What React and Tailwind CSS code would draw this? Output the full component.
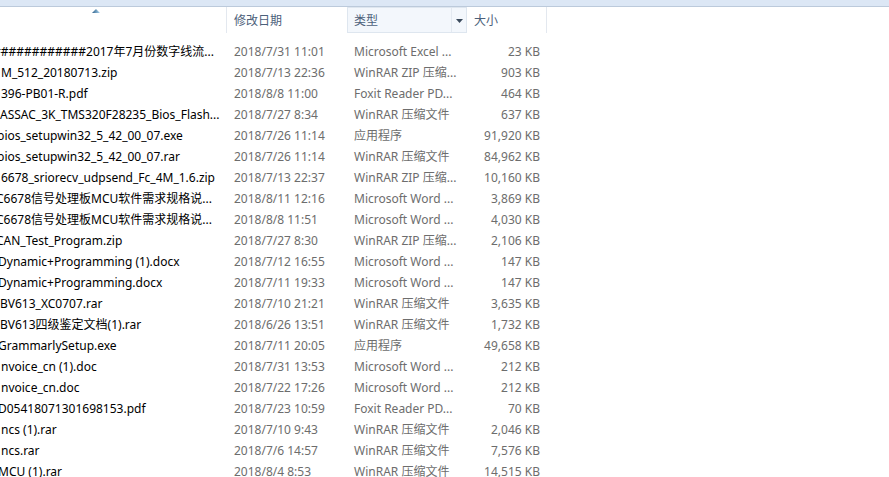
import React from "react";

const rows = [
  ["############2017年7月份数字线流...", "ml-[-7px]", "2018/7/31 11:01", "Microsoft Excel ...", "23 KB"],
  ["M_512_20180713.zip", "ml-[1px]", "2018/7/13 22:36", "WinRAR ZIP 压缩...", "903 KB"],
  ["396-PB01-R.pdf", "ml-[1px]", "2018/8/8 11:00", "Foxit Reader PD...", "464 KB"],
  ["ASSAC_3K_TMS320F28235_Bios_Flash...", "ml-[0px]", "2018/7/27 8:34", "WinRAR 压缩文件", "637 KB"],
  ["bios_setupwin32_5_42_00_07.exe", "ml-[-3px]", "2018/7/26 11:14", "应用程序", "91,920 KB"],
  ["bios_setupwin32_5_42_00_07.rar", "ml-[-3px]", "2018/7/26 11:14", "WinRAR 压缩文件", "84,962 KB"],
  ["6678_sriorecv_udpsend_Fc_4M_1.6.zip", "ml-[1px]", "2018/7/13 22:37", "WinRAR ZIP 压缩...", "10,160 KB"],
  ["C6678信号处理板MCU软件需求规格说...", "ml-[-4px]", "2018/8/11 12:16", "Microsoft Word ...", "3,869 KB"],
  ["C6678信号处理板MCU软件需求规格说...", "ml-[-4px]", "2018/8/8 11:51", "Microsoft Word ...", "4,030 KB"],
  ["CAN_Test_Program.zip", "ml-[-4px]", "2018/7/27 8:30", "WinRAR ZIP 压缩...", "2,106 KB"],
  ["Dynamic+Programming (1).docx", "ml-[-2px]", "2018/7/12 16:55", "Microsoft Word ...", "147 KB"],
  ["Dynamic+Programming.docx", "ml-[-2px]", "2018/7/11 19:33", "Microsoft Word ...", "147 KB"],
  ["BV613_XC0707.rar", "ml-[0px]", "2018/7/10 21:21", "WinRAR 压缩文件", "3,635 KB"],
  ["BV613四级鉴定文档(1).rar", "ml-[0px]", "2018/6/26 13:51", "WinRAR 压缩文件", "1,732 KB"],
  ["GrammarlySetup.exe", "ml-[-2px]", "2018/7/11 20:05", "应用程序", "49,658 KB"],
  ["nvoice_cn (1).doc", "ml-[1px]", "2018/7/31 13:53", "Microsoft Word ...", "212 KB"],
  ["nvoice_cn.doc", "ml-[1px]", "2018/7/22 17:26", "Microsoft Word ...", "212 KB"],
  ["D05418071301698153.pdf", "ml-[-2px]", "2018/7/23 10:59", "Foxit Reader PD...", "70 KB"],
  ["ncs (1).rar", "ml-[1px]", "2018/7/10 9:43", "WinRAR 压缩文件", "2,046 KB"],
  ["ncs.rar", "ml-[1px]", "2018/7/6 14:57", "WinRAR 压缩文件", "7,576 KB"],
  ["MCU (1).rar", "ml-[-2px]", "2018/8/4 8:53", "WinRAR 压缩文件", "14,515 KB"],
];

export default function App() {
  return (
    <div
      className="w-[889px] h-[477px] overflow-hidden bg-white text-[12px]"
      style={{ fontFamily: '"Noto Sans", "Noto Sans CJK SC", sans-serif' }}
    >
      <div className="h-[7px] bg-[#dce7f5] border-b border-[#bccadb]" />
      <div className="flex h-[26px] text-[#4c607a]">
        <div className="w-[227px] h-full border-r border-[#e3e8ef] pt-[2px] pl-[92px]">
          <svg width="8" height="5" viewBox="0 0 8 5">
            <defs>
              <linearGradient id="sa" x1="0" y1="0" x2="1" y2="0">
                <stop offset="0" stopColor="#2f5f88" />
                <stop offset="1" stopColor="#a8d4f0" />
              </linearGradient>
            </defs>
            <polygon points="4,0 8,4 0,4" fill="url(#sa)" />
          </svg>
        </div>
        <div className="w-[120px] h-full flex items-center pl-[7px] pt-[2px]">修改日期</div>
        <div className="w-[120px] h-full flex bg-[#f3f7fc] border border-[#dee6ef]">
          <div className="flex-1 flex items-center pl-[6px] pt-[2px] border-r border-[#e3e9f1]">类型</div>
          <div className="w-[14px] flex items-center justify-center pt-[1px]">
            <svg width="7" height="4" viewBox="0 0 7 4">
              <polygon points="0,0 7,0 3.5,4" fill="#3a4a5c" />
            </svg>
          </div>
        </div>
        <div className="w-[80px] h-full flex items-center pl-[7px] pt-[2px] border-r border-[#e3e8ef]">大小</div>
        <div className="flex-1" />
      </div>
      <div className="pt-[8px]">
        {rows.map((r, i) => (
          <div key={i} className="flex h-[21px] leading-[21px] whitespace-nowrap">
            <div className="w-[227px] overflow-hidden text-[#000000]">
              <span className={"inline-block " + r[1]}>{r[0]}</span>
            </div>
            <div className="w-[121px] pl-[7px] text-[#6d6d6d]">{r[2]}</div>
            <div className="w-[119px] pl-[6px] overflow-hidden text-[#6d6d6d]">{r[3]}</div>
            <div className="w-[80px] pr-[7px] text-right text-[#6d6d6d]">{r[4]}</div>
          </div>
        ))}
      </div>
    </div>
  );
}
